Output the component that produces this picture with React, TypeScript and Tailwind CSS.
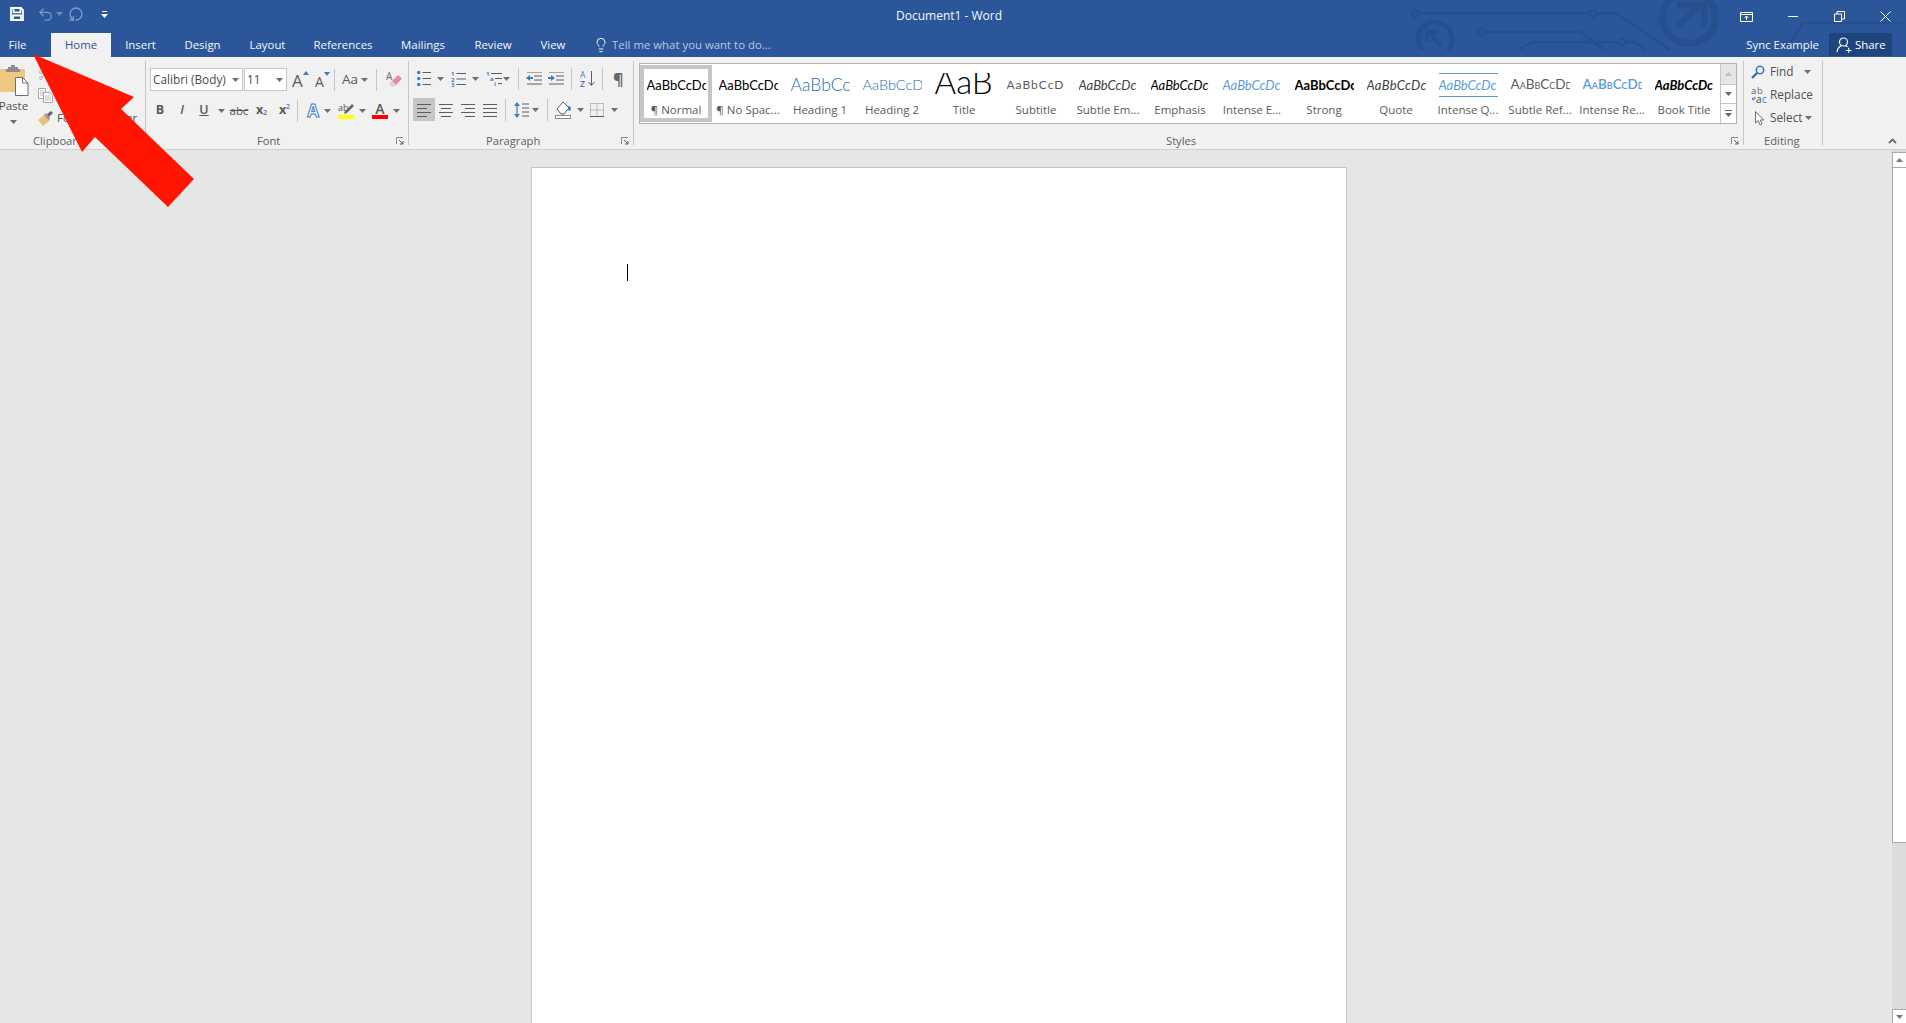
import React from "react";
import { Undo2, RotateCw, Lightbulb, Scissors } from "lucide-react";

const G = "#5c5c5c";
const BL = "#3f7cbf";

function Caret({ className = "", color = "#6e6e6e" }: { className?: string; color?: string }) {
  return (
    <svg width="7" height="4" viewBox="0 0 7 4" className={"flex-none " + className}>
      <path d="M0 0h7L3.5 4z" fill={color} />
    </svg>
  );
}

function Sep({ className = "" }: { className?: string }) {
  return <div className={"w-px h-[22px] flex-none bg-[#c6c6c6] " + className} />;
}

function Launcher({ className = "" }: { className?: string }) {
  return (
    <svg width="8" height="8" viewBox="0 0 8 8" className={"flex-none " + className}>
      <path d="M.5 7V.5H7" fill="none" stroke="#8a8a8a" />
      <path d="M3 3l4 4M7 4v3H4" fill="none" stroke="#5f5f5f" />
    </svg>
  );
}

function Lines({ ys, widths, x, w = 14 }: { ys: number[]; widths?: number[]; x?: number[]; w?: number }) {
  return (
    <svg width={w} height="14" viewBox={`0 0 ${w} 14`} className="flex-none">
      {ys.map((y, i) => (
        <rect key={i} x={x ? x[i] : 0} y={y} width={widths ? widths[i] : w} height="1" fill={G} />
      ))}
    </svg>
  );
}

function Cell({ className = "", children }: { className?: string; children?: React.ReactNode }) {
  return <div className={"flex-none h-full flex items-center justify-center " + className}>{children}</div>;
}

function Tab({ className = "", children }: { className?: string; children: React.ReactNode }) {
  return <div className={"flex-none h-full flex items-center justify-center text-[11.4px] text-[#f3f6fa] " + className}>{children}</div>;
}

function Paste() {
  return (
    <svg width="29" height="31" viewBox="0 0 29 31" className="flex-none">
      <path d="M0 4h24a1 1 0 0 1 1 1v22H1a1 1 0 0 1-1-1z" fill="#edc87e" />
      <path d="M8 4V2h3V0h4v2h3v2h2v3H6V4z" fill="#8d8d8d" />
      <path d="M15.500 12.500h7l5.500 5.500v12.500h-12.500z" fill="#fff" stroke="#6d6d6d" />
      <path d="M22.500 12.500v5.500h5.500" fill="none" stroke="#6d6d6d" />
    </svg>
  );
}

function CopyIcon() {
  return (
    <svg width="15" height="15" viewBox="0 0 15 15" className="flex-none">
      <path d="M.5.500h7v10h-7z" fill="#fff" stroke="#a8a8a8" />
      <path d="M5.500 4.500h6l3 3v7h-9z" fill="#fff" stroke="#a8a8a8" />
      <path d="M2 3h4M2 5h3M2 7h3M7 8h5M7 10h6M7 12h6" stroke="#bdbdbd" />
    </svg>
  );
}

function Painter() {
  return (
    <svg width="16" height="15" viewBox="0 0 16 15" className="flex-none">
      <path d="M0 9l6-5 5 6-6 5z" fill="#e9c27a" />
      <path d="M6 4l2-2 4 5-1 3z" fill="#9a9a9a" />
      <path d="M9 3l4-3 2 2-4 4z" fill="#6a6a6a" />
    </svg>
  );
}

function GrowA({ up }: { up: boolean }) {
  return (
    <div className={"flex items-start " + (up ? "w-[18px]" : "w-[14px]")}>
      <span className={"font-['Open_Sans',sans-serif] text-[#595959] leading-none " + (up ? "text-[17px] mt-[2px]" : "text-[14px] mt-[4px]")}>A</span>
      <svg width="6" height="4" viewBox="0 0 6 4" className="flex-none mt-[1px]">
        <path d={up ? "M3 0l3 4H0z" : "M0 0h6L3 4z"} fill={BL} />
      </svg>
    </div>
  );
}

function Eraser() {
  return (
    <svg width="17" height="17" viewBox="0 0 17 17" className="flex-none">
      <path d="M7 10l6-6 4 3.500-6 6.500-2-.5z" fill="#e88aa0" />
      <path d="M7 10l4 3.500-1.500 1.500H6.500L4.500 12.500z" fill="#f4d3da" stroke="#b79aa0" strokeWidth=".5" />
      <text x="1" y="9" fontSize="10" fontFamily="Open Sans" fill="#6a6a6a">A</text>
    </svg>
  );
}

function Bullets() {
  return (
    <svg width="14" height="15" viewBox="0 0 14 15" className="flex-none">
      {[1.500, 7.500, 13.500].map((y) => (
        <g key={y}>
          <circle cx="1.700" cy={y} r="1.700" fill={BL} />
          <rect x="5.500" y={y - 0.5} width="8.500" height="1" fill={G} />
        </g>
      ))}
    </svg>
  );
}

function Numbers() {
  return (
    <svg width="15" height="16" viewBox="0 0 15 16" className="flex-none">
      {["1", "2", "3"].map((t, i) => (
        <g key={t}>
          <text x="0" y={5 + i * 5.500} fontSize="6" fontWeight="700" fontFamily="Open Sans" fill={BL}>{t}</text>
          <rect x="5.500" y={2 + i * 5.500} width="9.500" height="1" fill={G} />
        </g>
      ))}
    </svg>
  );
}

function Multi() {
  return (
    <svg width="16" height="16" viewBox="0 0 16 16" className="flex-none">
      <text x="0" y="5" fontSize="6" fontWeight="700" fontFamily="Open Sans" fill={BL}>1</text>
      <rect x="5" y="2" width="11" height="1" fill={G} />
      <text x="4" y="10" fontSize="6" fontWeight="700" fontFamily="Open Sans" fill={BL}>a</text>
      <rect x="9" y="7" width="7" height="1" fill={G} />
      <text x="8" y="15" fontSize="6" fontWeight="700" fontFamily="Open Sans" fill={BL}>i</text>
      <rect x="12" y="12" width="4" height="1" fill={G} />
    </svg>
  );
}

function Indent({ increase }: { increase: boolean }) {
  return (
    <svg width="16" height="13" viewBox="0 0 16 13" className="flex-none">
      <path d="M1 0h15M8 4h8M8 8h8M1 12h15" stroke={G} />
      <path d={increase ? "M0 5h3V3L7 6 3 9V7H0z" : "M7 5H4V3L0 6l4 3V7h3z"} fill={BL} />
    </svg>
  );
}

function Sort() {
  return (
    <svg width="15" height="16" viewBox="0 0 15 16" className="flex-none">
      <text x="0" y="7" fontSize="8.500" fontFamily="Open Sans" fill={BL}>A</text>
      <text x="0" y="15.500" fontSize="8.500" fontFamily="Open Sans" fontWeight="600" fill="#8a5aa8">Z</text>
      <path d="M11.500 0v14M8.500 11l3 3.500 3-3.500" fill="none" stroke={G} />
    </svg>
  );
}

function LineSpacing() {
  return (
    <svg width="15" height="16" viewBox="0 0 15 16" className="flex-none">
      <path d="M3 1v14" stroke={BL} strokeWidth="1.200" />
      <path d="M0 4l3-4 3 4zM0 12l3 4 3-4z" fill={BL} />
      <path d="M8 2h7M8 6h7M8 10h7M8 14h7" stroke={G} />
    </svg>
  );
}

function Shading() {
  return (
    <svg width="17" height="19" viewBox="0 0 17 19" className="flex-none">
      <path d="M2 9l6-7 6 6-5 6H6z" fill="#fff" stroke={G} />
      <path d="M13 6c2 0 3 1 3 3l-1 2-2-1z" fill={BL} />
      <rect x=".5" y="15.500" width="15" height="3" fill="#fff" stroke="#8a8a8a" />
    </svg>
  );
}

function Borders() {
  return (
    <svg width="14" height="14" viewBox="0 0 14 14" className="flex-none">
      <path d="M.5.500h13M.5 7h13M.5 .5v13M7 .5v13M13.500 .5v13" fill="none" stroke="#8a8a8a" strokeDasharray="1 1" />
      <path d="M0 13.500h14" stroke={G} />
    </svg>
  );
}

function Clickfind() {
  return (
    <svg width="14" height="14" viewBox="0 0 14 14" className="flex-none">
      <circle cx="9" cy="5" r="3.700" fill="none" stroke={BL} strokeWidth="1.600" />
      <path d="M6.300 7.700L1 13" stroke="#2f6cab" strokeWidth="2.200" />
    </svg>
  );
}

function ReplaceIcon() {
  return (
    <svg width="17" height="16" viewBox="0 0 17 16" className="flex-none">
      <text x="0" y="7" fontSize="9.500" fontFamily="Open Sans" fill="#555">a</text>
      <text x="6" y="7" fontSize="9.500" fontFamily="Open Sans" fill="#8a5aa8">b</text>
      <text x="5" y="15.500" fontSize="10" fontFamily="Open Sans" fill="#444">a</text>
      <text x="11" y="15.500" fontSize="10" fontFamily="Open Sans" fill={BL}>c</text>
      <path d="M4 10v2H1M2.500 10.500L1 12l1.500 1.500" fill="none" stroke={BL} />
    </svg>
  );
}

function Pointer() {
  return (
    <svg width="10" height="15" viewBox="0 0 10 15" className="flex-none">
      <path d="M.5.500v11.500l2.700-2.500 1.800 4.500 2-1-1.800-4h3.500z" fill="#fff" stroke="#6e6e6e" />
    </svg>
  );
}

function Group({
  className,
  label,
  labelClass,
  launcher = true,
  children,
}: {
  className: string;
  label: string;
  labelClass: string;
  launcher?: boolean;
  children: React.ReactNode;
}) {
  return (
    <div className={"flex-none h-full flex flex-col border-r border-[#c6c6c6] " + className}>
      <div className="flex-1 min-h-0 flex flex-col">{children}</div>
      <div className="h-[10px] mb-[-1px] flex items-center">
        <span className={"text-[11.2px] leading-none text-[#606060] whitespace-nowrap " + labelClass}>{label}</span>
        {launcher && <Launcher className="ml-auto mr-[4px]" />}
      </div>
    </div>
  );
}

const STYLES: { label: string; sample: string; cls: string; sel?: boolean; wrap?: string }[] = [
  { label: "¶ Normal", sample: "AaBbCcDc", cls: "text-[13px] text-black", sel: true },
  { label: "¶ No Spac...", sample: "AaBbCcDc", cls: "text-[13px] text-black" },
  { label: "Heading 1", sample: "AaBbCc", cls: "text-[17.500px] text-[#1f6cb5] font-light" },
  { label: "Heading 2", sample: "AaBbCcD", cls: "text-[14.500px] text-[#1f6cb5] font-light" },
  { label: "Title", sample: "AaB", cls: "text-[33px] text-black font-light mt-[-8px]" },
  { label: "Subtitle", sample: "AaBbCcD", cls: "text-[12px] text-[#5a5a5a] tracking-[1px]" },
  { label: "Subtle Em...", sample: "AaBbCcDc", cls: "text-[13px] italic text-[#404040]" },
  { label: "Emphasis", sample: "AaBbCcDc", cls: "text-[13px] italic text-black" },
  { label: "Intense E...", sample: "AaBbCcDc", cls: "text-[13px] italic text-[#5b9bd5]" },
  { label: "Strong", sample: "AaBbCcDc", cls: "text-[13px] font-bold text-black" },
  { label: "Quote", sample: "AaBbCcDc", cls: "text-[13px] italic text-[#404040] tracking-[0.3px]" },
  { label: "Intense Q...", sample: "AaBbCcDc", cls: "text-[13px] italic text-[#5b9bd5]", wrap: "border-y border-[#5b9bd5] h-[20px]" },
  { label: "Subtle Ref...", sample: "AaBbCcDd", cls: "text-[13.500px] [font-variant:small-caps] text-[#5a5a5a]" },
  { label: "Intense Re...", sample: "AaBbCcDd", cls: "text-[13.500px] [font-variant:small-caps] font-semibold text-[#5b9bd5]" },
  { label: "Book Title", sample: "AaBbCcDc", cls: "text-[13px] italic font-bold text-black" },
];

function StyleItem({ s }: { s: (typeof STYLES)[number] }) {
  return (
    <div className={"flex-none w-[72px] h-[57px] mt-px border-4 flex flex-col items-center " + (s.sel ? "border-[#c6c6c6]" : "border-transparent")}>
      <div className="h-[32px] w-full flex-none flex items-center justify-center">
        <div className={"w-[59px] h-[24px] overflow-hidden flex items-center " + (s.wrap ?? "")}>
          <span className={"font-['Lato',sans-serif] whitespace-nowrap leading-none " + s.cls}>{s.sample}</span>
        </div>
      </div>
      <div className="h-[16px] pt-px flex-none flex items-center justify-center text-[11.500px] whitespace-nowrap text-[#5a5a5a]">{s.label}</div>
    </div>
  );
}

export default function App() {
  return (
    <div className="relative w-full h-screen overflow-hidden flex flex-col bg-[#e6e6e6] font-['Open_Sans',sans-serif]">
      {/* Title bar */}
      <div className="relative flex-none h-[57px] bg-[#2b579a] overflow-hidden">
        <svg width="1906" height="50" viewBox="0 0 1906 50" className="absolute left-0 top-0">
          <g fill="none" stroke="#264f8d">
            <g strokeWidth="2.500">
              <circle cx="1415.500" cy="13.500" r="3.500" />
              <path d="M1419 13.500h170.500M1597 13.500h20L1670 50" />
              <circle cx="1593" cy="13.500" r="3.500" />
              <circle cx="1481" cy="32" r="3.500" />
              <path d="M1485 32h95l25 18" />
              <path d="M1518 50l15-8h85M1626 42h9l10 8" />
              <circle cx="1622" cy="42" r="3.500" />
              <path d="M1785 50l18-27h100" />
            </g>
            <circle cx="1435" cy="39" r="17" strokeWidth="5" />
            <path d="M1442 46l-13-13M1427 42v-10h11" strokeWidth="4.500" />
            <circle cx="1689" cy="17" r="26.500" strokeWidth="7" />
            <path d="M1677 27l22-21M1677 5h27v22" strokeWidth="6.500" />
          </g>
        </svg>
        <div className="relative h-[33px] flex items-center">
          <div className="w-[896px] flex-none flex items-center pl-[10px] mb-[5px]">
            <svg width="14" height="14" viewBox="0 0 14 14" className="flex-none">
              <path d="M1 1h10l2 2v10H1zM3.500 1v4.300h7V1M3 13V8.500h8V13" fill="none" stroke="#fff" strokeWidth="1.800" />
            </svg>
            <Undo2 size={17} strokeWidth={1.800} color="#7f9bc6" className="ml-[13px] flex-none" />
            <Caret color="#6f8cba" className="ml-[2px]" />
            <RotateCw size={16} strokeWidth={2} color="#7f9bc6" className="ml-[5px] flex-none scale-x-[-1] rotate-[-90deg]" />
            <svg width="7" height="7" viewBox="0 0 7 7" className="ml-[17px] flex-none">
              <path d="M1 .500h5" stroke="#fff" />
              <path d="M0 3h7L3.500 7z" fill="#fff" />
            </svg>
          </div>
          <div className="text-[12px] text-[#f6f8fb] whitespace-nowrap mb-[1px]">Document1 - Word</div>
          <div className="ml-auto flex items-center pr-[15px]">
            <svg width="13" height="10" viewBox="0 0 13 10" className="flex-none">
              <path d="M.5.500h12v9H.5zM.5 2.500h12" fill="none" stroke="#fff" />
              <path d="M6.500 8V4M4.500 6l2-2 2 2" fill="none" stroke="#fff" />
            </svg>
            <div className="ml-[35px] w-[10px] h-px bg-white flex-none" />
            <svg width="11" height="11" viewBox="0 0 11 11" className="ml-[36px] flex-none">
              <path d="M.5 3h7v7.500h-7zM3 3V.5h7.500V8H8" fill="none" stroke="#fff" />
            </svg>
            <svg width="11" height="11" viewBox="0 0 11 11" className="ml-[35px] flex-none">
              <path d="M.5.500l10 10M10.500.500l-10 10" stroke="#fff" />
            </svg>
          </div>
        </div>
        <div className="relative h-[24px] flex items-stretch">
          <Tab className="w-[35px]">File</Tab>
          <Tab className="w-[60px] ml-[16px] bg-[#f1f1f1] !text-[#2b579a]">Home</Tab>
          <Tab className="w-[59px]">Insert</Tab>
          <Tab className="w-[65px]">Design</Tab>
          <Tab className="w-[65px]">Layout</Tab>
          <Tab className="w-[86px]">References</Tab>
          <Tab className="w-[74px]">Mailings</Tab>
          <Tab className="w-[66px]">Review</Tab>
          <Tab className="w-[54px]">View</Tab>
          <div className="flex items-center ml-[13px]">
            <Lightbulb size={16} strokeWidth={1.400} color="#ffffff" className="flex-none" />
            <span className="ml-[3px] text-[11.4px] text-[#b9c9e2] whitespace-nowrap">Tell me what you want to do...</span>
          </div>
          <div className="ml-auto flex items-stretch pr-[14px]">
            <span className="self-center text-[11.4px] text-[#f3f6fa] whitespace-nowrap">Sync Example</span>
            <div className="ml-[10px] w-[63px] mb-px bg-[#1f467c] flex items-center pl-[7px]">
              <svg width="16" height="16" viewBox="0 0 16 16" className="flex-none">
                <circle cx="7.500" cy="5" r="4" fill="none" stroke="#fff" strokeWidth="1.200" />
                <path d="M1 15c.5-4 2.500-6 5-6.500M9 8.500c1 .2 2 .8 2.500 1.500M10 13.500h5.500M12.700 10.700v5" fill="none" stroke="#fff" strokeWidth="1.200" />
              </svg>
              <span className="ml-[3px] text-[11.400px] text-white">Share</span>
            </div>
          </div>
        </div>
      </div>

      {/* Ribbon */}
      <div className="flex-none h-[93px] py-[4px] flex bg-[#f1f1f1] border-b border-[#d0d0d0]">
        <Group className="w-[146px]" label="Clipboard" labelClass="ml-[33px]" launcher={false}>
          <div className="flex">
            <div className="flex-none w-[30px] flex flex-col items-center pt-[4px]">
              <div className="ml-[-1px]"><Paste /></div>
              <span className="mt-[2px] ml-[-3px] text-[11.500px] leading-[16px] text-[#505050]">Paste</span>
              <Caret className="mt-[6px] ml-[-4px]" />
            </div>
            <div className="flex-none ml-[8px] flex flex-col text-[11.500px] text-[#505050]">
              <div className="h-[16px] mt-[6px] flex items-center"><Scissors size={12} color="#b5b5b5" className="flex-none" /><span className="ml-[6px]">Cut</span></div>
              <div className="h-[16px] mt-[4px] flex items-center"><CopyIcon /><span className="ml-[4px]">Copy</span></div>
              <div className="h-[16px] mt-[7px] flex items-center"><Painter /><span className="ml-[3px]">Format Painter</span></div>
            </div>
          </div>
        </Group>

        <Group className="w-[263px]" label="Font" labelClass="ml-[111px]">
          <div className="h-[23px] mt-[7px] flex items-center">
            <div className="ml-[4px] w-[93px] h-full bg-white border border-[#c6c6c6] flex items-center flex-none">
              <span className="ml-[2px] text-[11.800px] text-[#4a4a4a] whitespace-nowrap">Calibri (Body)</span>
              <Caret className="ml-auto mr-[3px]" />
            </div>
            <div className="ml-px w-[43px] h-full bg-white border border-[#c6c6c6] flex items-center flex-none">
              <span className="ml-[2px] text-[11.800px] text-[#4a4a4a]">11</span>
              <Caret className="ml-auto mr-[3px]" />
            </div>
            <div className="ml-[5px] flex-none"><GrowA up /></div>
            <div className="ml-[5px] flex-none"><GrowA up={false} /></div>
            <Sep className="ml-[5px]" />
            <span className="ml-[7px] text-[13.500px] leading-none text-[#595959]">Aa</span>
            <Caret className="ml-[3px]" />
            <Sep className="ml-[8px]" />
            <div className="ml-[8px]"><Eraser /></div>
          </div>
          <div className="h-[23px] mt-[8px] flex items-center text-[#595959]">
            <Cell className="w-[22px] ml-[3px] font-bold text-[12.500px]">B</Cell>
            <Cell className="w-[22px] italic text-[12.500px] font-semibold">I</Cell>
            <Cell className="w-[22px] underline font-semibold text-[12.500px]">U</Cell>
            <Caret className="ml-[3px]" />
            <Cell className="w-[22px] ml-[3px] line-through text-[11.500px]">abc</Cell>
            <Cell className="w-[23px] font-bold text-[12.500px]">
              <span>x</span><span className="text-[7px] text-[#3f7cbf] mt-[6px] font-semibold">2</span>
            </Cell>
            <Cell className="w-[23px] font-bold text-[12.500px]">
              <span>x</span><span className="text-[7px] text-[#3f7cbf] mb-[6px] font-semibold">2</span>
            </Cell>
            <Sep className="ml-px" />
            <Cell className="w-[22px] ml-[4px] font-bold text-[17px] text-white [-webkit-text-stroke:1px_#3f7cbf]">A</Cell>
            <Caret />
            <Cell className="w-[16px] ml-[7px] flex-col">
              <svg width="16" height="12" viewBox="0 0 16 12">
                <text x="0" y="8" fontSize="9" fontFamily="Open Sans" fill="#555">ab</text>
                <path d="M6 11l1-3 7-7 2 2-7 7z" fill="#6a6a6a" />
              </svg>
              <div className="w-[16px] h-[4px] bg-[#ffff00]" />
            </Cell>
            <Caret className="ml-[5px]" />
            <Cell className="w-[16px] ml-[6px] flex-col">
              <span className="text-[14px] leading-[12px] font-semibold">A</span>
              <div className="w-[16px] h-[4px] bg-[#ff0000]" />
            </Cell>
            <Caret className="ml-[5px]" />
          </div>
        </Group>

        <Group className="w-[225px]" label="Paragraph" labelClass="ml-[77px]">
          <div className="h-[23px] mt-[6px] flex items-center">
            <div className="ml-[8px]"><Bullets /></div>
            <Caret className="ml-[6px]" />
            <div className="ml-[7px]"><Numbers /></div>
            <Caret className="ml-[6px]" />
            <div className="ml-[7px]"><Multi /></div>
            <Caret className="ml-px" />
            <Sep className="ml-[8px]" />
            <div className="ml-[7px]"><Indent increase={false} /></div>
            <div className="ml-[6px]"><Indent increase /></div>
            <Sep className="ml-[7px]" />
            <div className="ml-[8px]"><Sort /></div>
            <Sep className="ml-[7px]" />
            <span className="ml-[10px] font-bold text-[16px] leading-none text-[#666]">¶</span>
          </div>
          <div className="h-[23px] mt-[8px] flex items-center">
            <Cell className="w-[22px] ml-[4px] bg-[#c6c6c6]"><Lines ys={[1, 5, 9, 13]} widths={[14, 10, 14, 10]} /></Cell>
            <Cell className="w-[22px]"><Lines ys={[1, 5, 9, 13]} widths={[14, 10, 14, 10]} x={[0, 2, 0, 2]} /></Cell>
            <Cell className="w-[22px]"><Lines ys={[1, 5, 9, 13]} widths={[14, 10, 14, 10]} x={[0, 4, 0, 4]} /></Cell>
            <Cell className="w-[22px]"><Lines ys={[1, 5, 9, 13]} /></Cell>
            <Sep className="ml-[4px]" />
            <div className="ml-[8px]"><LineSpacing /></div>
            <Caret className="ml-[3px]" />
            <Sep className="ml-[8px]" />
            <div className="ml-[7px]"><Shading /></div>
            <Caret className="ml-[5px]" />
            <div className="ml-[6px]"><Borders /></div>
            <Caret className="ml-[7px]" />
          </div>
        </Group>

        <Group className="w-[1110px]" label="Styles" labelClass="ml-[532px]">
          <div className="ml-[5px] mt-[2px] w-[1098px] h-[61px] flex bg-white border border-[#b1b1b1]">
            {STYLES.map((s) => (
              <StyleItem key={s.label} s={s} />
            ))}
            <div className="flex-none w-[16px] h-full flex flex-col border-l border-[#c6c6c6]">
              <div className="h-[21px] bg-[#e6e6e6] border-b border-[#c6c6c6] flex items-center justify-center"><Caret color="#c0c0c0" className="rotate-180" /></div>
              <div className="h-[19px] border-b border-[#c6c6c6] flex items-center justify-center"><Caret color="#666" /></div>
              <div className="flex-1 flex flex-col items-center justify-center">
                <div className="w-[7px] h-px bg-[#666] mb-[2px]" />
                <Caret color="#666" />
              </div>
            </div>
          </div>
        </Group>

        <Group className="w-[79px]" label="Editing" labelClass="ml-[20px]" launcher={false}>
          <div className="text-[11.800px] text-[#505050]">
            <div className="h-[21px] flex items-center">
              <div className="w-[26px] flex-none flex justify-end pr-[5px]"><Clickfind /></div>
              <span>Find</span>
              <Caret className="ml-[10px]" />
            </div>
            <div className="h-[20px] mt-[3px] flex items-center">
              <div className="w-[26px] flex-none flex justify-end pr-[2px] "><ReplaceIcon /></div>
              <span>Replace</span>
            </div>
            <div className="h-[20px] mt-[3px] flex items-center">
              <div className="w-[26px] flex-none flex justify-end pr-[5px]"><Pointer /></div>
              <span>Select</span>
              <Caret className="ml-[2px]" />
            </div>
          </div>
        </Group>

        <div className="flex-1 h-full flex items-end justify-end pr-[9px] pb-[1px]">
          <svg width="9" height="6" viewBox="0 0 9 6" className="flex-none">
            <path d="M1 5l3.500-3.500L8 5" fill="none" stroke="#6a6a6a" strokeWidth="1.800" />
          </svg>
        </div>
      </div>

      {/* Canvas */}
      <div className="flex-1 min-h-0 flex overflow-hidden">
        <div className="flex-1 min-w-0 pl-[531px] pt-[17px] overflow-hidden">
          <div className="w-[816px] h-[1056px] bg-white border border-[#c6c6c6] pl-[95px] pt-[96px]">
            <div className="w-px h-[17px] bg-black" />
          </div>
        </div>
        <div className="flex-none w-[14px] h-full pt-[2px] flex flex-col bg-[#dcdcdc]">
          <div className="h-[16px] flex-none bg-white border border-r-0 border-[#ababab] flex items-center justify-center"><Caret color="#777" className="rotate-180" /></div>
          <div className="h-[675px] flex-none bg-white border-l border-b border-[#ababab]" />
          <div className="flex-1" />
          <div className="h-[14px] flex-none bg-white flex items-center justify-center border-t border-l border-[#ababab]"><Caret color="#777" /></div>
        </div>
      </div>

      {/* Red annotation arrow */}
      <svg width="1906" height="1023" viewBox="0 0 1906 1023" className="absolute left-0 top-0 pointer-events-none">
        <path d="M33 54L134 97 121 109 194 179 168 207 95 137 82 152z" fill="#ff1500" />
      </svg>
    </div>
  );
}
